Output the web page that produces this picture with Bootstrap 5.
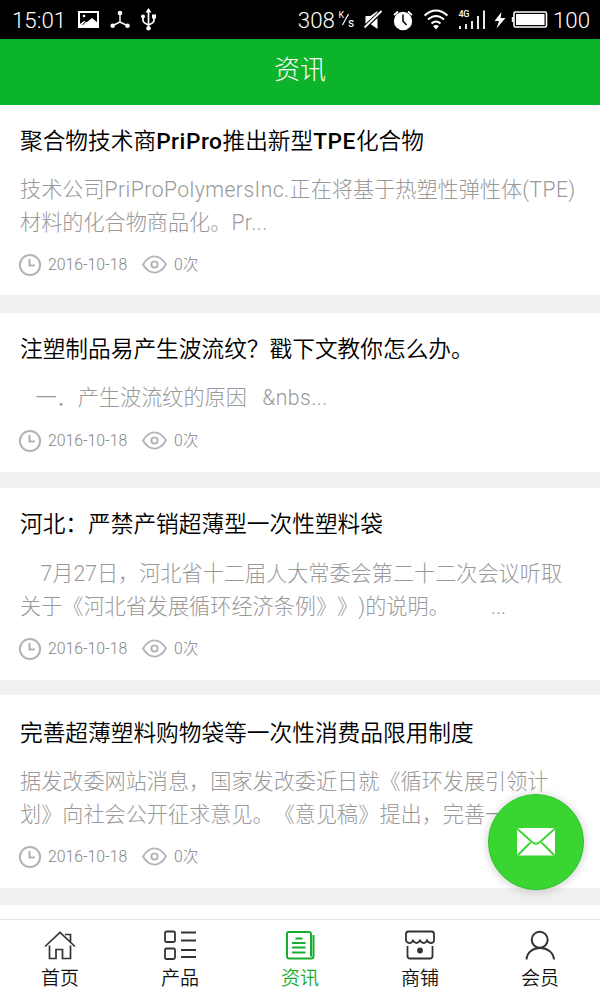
<!DOCTYPE html>
<html lang="zh-CN">
<head>
<meta charset="utf-8">
<meta name="viewport" content="width=device-width, initial-scale=1">
<title>资讯</title>
<link href="https://cdn.jsdelivr.net/npm/bootstrap@5.3.0/dist/css/bootstrap.min.css" rel="stylesheet">
<style>
  body { font-family: Roboto, "Noto Sans CJK SC", sans-serif; background: #f0f0f0; color: #000; text-spacing-trim: space-all; font-feature-settings: "chws" 0, "halt" 0; }
  svg { display: block; flex: none; }
  .screen { width: 600px; height: 1000px; }
  .status { height: 39px; background: #000; color: #fff; font-size: 22.3px; font-weight: 300; line-height: 40px; padding: 0 10px 0 12px; }
  .status .clock-time { width: 62px; }
  .status .net { margin-left: auto; }
  .topbar { height: 66px; background: #0bb42a; color: #fff; font-size: 26px; font-weight: 300; line-height: 62px; }
  .feed { gap: 16px; }
  .news { background: #fff; padding: 19px 20px 20px; height: 192px; flex: none; }
  .news.first { height: 190px; margin-bottom: 2px; }
  .news.brief { height: 159px; }
  .news.low { padding-top: 21px; margin-top: -1px; margin-bottom: 1px; height: 192.5px; }
  .news h2 { font-size: 22.7px; line-height: 35px; font-weight: 350; margin: 0 0 14px; white-space: nowrap; }
  .news h2 b { font-weight: 500; letter-spacing: .5px; }
  .news p { font-size: 21.15px; line-height: 33px; font-weight: 300; color: #999; white-space: pre; margin: 0 0 13px; }
  .news p span { letter-spacing: .45px; }
  .news.brief p { margin-bottom: 14px; }
  .news.mid h2 { margin-bottom: 15px; }
  .meta { font-size: 15.8px; font-weight: 300; line-height: 24px; color: #858585; margin-left: -2px; }
  .meta .day { width: 96px; padding-left: 6px; }
  .meta .hits { padding-left: 7px; }
  .fab { left: 488px; top: 794px; width: 96px; height: 96px; background: #39d631; border: 1px solid #2dc52a; box-shadow: 0 1px 10px rgba(0,0,0,.22); padding: 0; }
  .tabs { height: 81px; background: #fff; border-top: 1px solid #e6e6e6; }
  .tabs a { color: #111; font-size: 19px; font-weight: 350; line-height: 30px; padding-top: 8px; text-decoration: none; }
  .tabs a.active { color: #16ad30; }
</style>
</head>
<body>
<svg width="0" height="0" class="position-absolute">
  <symbol id="clock" viewBox="0 0 24 24"><g fill="none" stroke="#b4b4b4" stroke-width="2"><circle cx="12" cy="12" r="10.1"/><path d="M11.500 6v6.500h5.500"/></g></symbol>
  <symbol id="eye" viewBox="0 0 24 24"><g fill="none" stroke="#b4b4b4" stroke-width="1.900"><path d="M1 12C4 7 8 4.200 12 4.200S20 7 23 12C20 17 16 19.800 12 19.800S4 17 1 12z"/><circle cx="12" cy="12" r="3"/></g></symbol>
</svg>
<div class="screen d-flex flex-column position-relative overflow-hidden">
  <div class="status d-flex flex-shrink-0">
    <span class="clock-time">15:01</span>
    <svg width="88" height="39" viewBox="74 0 88 39">
      <path d="M79 12h19v15H79z" fill="none" stroke="#fff" stroke-width="2"/>
      <path d="M80 26v-2l4-3 3 1 5-4 6 5v3z" fill="#fff"/><circle cx="84" cy="16" r="1.300" fill="#fff"/><path d="M82.500 25l3.500-4" stroke="#000"/>
      <path d="M120 13v9l-8 4M120 22l8 4" fill="none" stroke="#fff" stroke-width="1.400"/>
      <g fill="#fff"><circle cx="120" cy="13" r="2.300"/><circle cx="112.700" cy="25.700" r="2.300"/><circle cx="127.500" cy="25.700" r="2.300"/></g>
      <path d="M148.500 11v17M143 16v4q0 3 5.500 5q5.500-2 5.500-5v-4" fill="none" stroke="#fff" stroke-width="1.700"/>
      <g fill="#fff"><path d="M148.500 8l3 4.500h-6z"/><circle cx="143" cy="16.500" r="2"/><path d="M152 14.500h4v4h-4z"/><circle cx="148.500" cy="28.300" r="2.200"/></g>
    </svg>
    <span class="net">308</span>
    <svg width="218" height="39" viewBox="333.500 0 218 39">
      <g fill="#fff" font-family="Roboto" font-weight="400"><text x="337" y="17.500" font-size="9">K</text><text x="346.500" y="27" font-size="12">s</text><text x="457" y="17" font-size="9" font-weight="500" textLength="11">4G</text></g>
      <path d="M341 25l6-11" stroke="#fff" stroke-width="1.200"/>
      <path d="M364 16h5l7-5v18l-7-5h-5z" fill="#fff"/><path d="M362.500 28l18-17" stroke="#000" stroke-width="4"/><path d="M363 27.500l17-16.500" stroke="#fff" stroke-width="1.800"/>
      <circle cx="401.500" cy="21" r="9.200" fill="#fff"/><path d="M401.500 14.500V21l3.500 4" fill="none" stroke="#000" stroke-width="1.500"/><path d="M392.500 15l4-3.500M410.500 15l-4-3.500" stroke="#fff" stroke-width="1.700"/>
      <g fill="none" stroke="#fff" stroke-width="2"><path d="M423 15.500q11.500-10 23 0M426.500 19.500q8-7 16 0M430 23.500q4.500-4 9 0"/></g><path d="M431.500 26q3-2 6 0l-3 3.500z" fill="#fff"/>
      <path d="M458.500 29v-3M464.500 29v-5M470.500 29v-8M476.500 29V16M482.500 29V10.500" stroke="#fff" stroke-width="1.800"/>
      <path d="M500 12l-7 9h4.500l-2.500 7.500 9-10.500h-5z" fill="#fff"/>
      <rect x="512.500" y="12" width="32.500" height="15" rx="1.500" fill="none" stroke="#fff" stroke-width="1.600"/><path d="M514.500 14h28.500v11h-28.500z" fill="#fff"/><path d="M510.300 17h1.800v5h-1.800z" fill="#fff"/>
    </svg>
    <span>100</span>
  </div>
  <header class="topbar text-center flex-shrink-0">资讯</header>

  <main class="feed d-flex flex-column flex-grow-1 overflow-hidden">
    <article class="news first">
      <h2>聚合物技术商<b>PriPro</b>推出新型<b>TPE</b>化合物</h2>
      <p>技术公司<span>PriProPolymersInc.</span>正在将基于热塑性弹性体<span>(TPE)</span>
材料的化合物商品化。<span>Pr...</span></p>
      <div class="meta d-flex align-items-center"><svg width="24" height="24"><use href="#clock"/></svg><span class="day">2016-10-18</span><svg width="25" height="25" class="ms-1"><use href="#eye"/></svg><span class="hits">0次</span></div>
    </article>
    <article class="news brief">
      <h2>注塑制品易产生波流纹？戳下文教你怎么办。</h2>
      <p>   一．产生波流纹的原因   <span>&amp;nbs...</span></p>
      <div class="meta d-flex align-items-center"><svg width="24" height="24"><use href="#clock"/></svg><span class="day">2016-10-18</span><svg width="25" height="25" class="ms-1"><use href="#eye"/></svg><span class="hits">0次</span></div>
    </article>
    <article class="news mid">
      <h2>河北：严禁产销超薄型一次性塑料袋</h2>
      <p>    7月27日，河北省十二届人大常委会第二十二次会议听取
关于《河北省发展循环经济条例》》)的说明。        ...</p>
      <div class="meta d-flex align-items-center"><svg width="24" height="24"><use href="#clock"/></svg><span class="day">2016-10-18</span><svg width="25" height="25" class="ms-1"><use href="#eye"/></svg><span class="hits">0次</span></div>
    </article>
    <article class="news low">
      <h2>完善超薄塑料购物袋等一次性消费品限用制度</h2>
      <p>据发改委网站消息，国家发改委近日就《循环发展引领计
划》向社会公开征求意见。《意见稿》提出，完善一</p>
      <div class="meta d-flex align-items-center"><svg width="24" height="24"><use href="#clock"/></svg><span class="day">2016-10-18</span><svg width="25" height="25" class="ms-1"><use href="#eye"/></svg><span class="hits">0次</span></div>
    </article>
    <article class="news"></article>
  </main>

  <nav class="tabs row g-0 flex-shrink-0 text-center">
    <a class="col" href="#"><svg class="mx-auto" width="36" height="36" viewBox="0 0 36 36" fill="none" stroke="#333" stroke-width="1.700"><path d="M3 18.500L18 4.500l15 14M7.500 17.500v13h6.500v-9h6.500v9h8v-13M23 6.500h5.500v7"/></svg>首页</a>
    <a class="col" href="#"><svg class="mx-auto" width="36" height="36" viewBox="0 0 36 36" fill="none" stroke="#333" stroke-width="1.800"><rect x="3" y="3.500" width="10" height="10.500" rx="1.500"/><rect x="3" y="20.500" width="10" height="10.500" rx="1.500"/><path d="M19 4.500H34M19 12.500H34M19 22H34M19 29H34"/></svg>产品</a>
    <a class="col active" href="#"><svg class="mx-auto" width="36" height="36" viewBox="0 0 36 36" fill="none" stroke="#16ad30" stroke-width="2"><path d="M29 27V6q0-2-2-2H7Q5 4 5 6v22q0 2.500 2 2.500h22q2.500 0 2.500-2.500V7"/><path d="M29 27v1.500M13.500 10.500h7M10 15h13.500M10 19.500h13.500M10 24.500h13.500"/></svg>资讯</a>
    <a class="col" href="#"><svg class="mx-auto" width="36" height="36" viewBox="0 0 36 36" fill="none" stroke="#333" stroke-width="1.800"><path d="M6.500 3.500h23q2.500 0 2.500 2.500v6.500q0 2.500-3.500 2.500q-2.500-.5-3.500-2.500-1.500 3-3.500 2.500-2 0-3.500-2.500-1.500 2.500-3.500 2.500-2 0-3.500-2.500-1.500 3-3.500 2.500Q4 14.500 4 12V6q0-2.500 2.500-2.500zM5.500 18v10q0 2.500 2.500 2.500h20q2.500 0 2.500-2.500V18"/><circle cx="18" cy="22.500" r="2.900" fill="#333" stroke="none"/></svg>商铺</a>
    <a class="col" href="#"><svg class="mx-auto" width="36" height="36" viewBox="0 0 36 36" fill="none" stroke="#333" stroke-width="2"><circle cx="17.700" cy="11.800" r="8"/><path d="M4.500 31.500C5 24 11 20 18 20s13.500 4 14 11.500"/></svg>会员</a>
  </nav>

  <button class="fab btn rounded-circle position-absolute" type="button" aria-label="留言"><svg class="mx-auto" width="38" height="28" viewBox="0 0 38 28"><rect width="38" height="27.500" rx="2" fill="#fff"/><path d="M.5 1l14.500 13q4 3.500 8 0L37.500 1M1 27l12.500-12.500M37 27L24.500 14.500" fill="none" stroke="#39d631" stroke-width="1.900"/></svg></button>
</div>
<script src="https://cdn.jsdelivr.net/npm/bootstrap@5.3.0/dist/js/bootstrap.bundle.min.js"></script>
</body>
</html>
